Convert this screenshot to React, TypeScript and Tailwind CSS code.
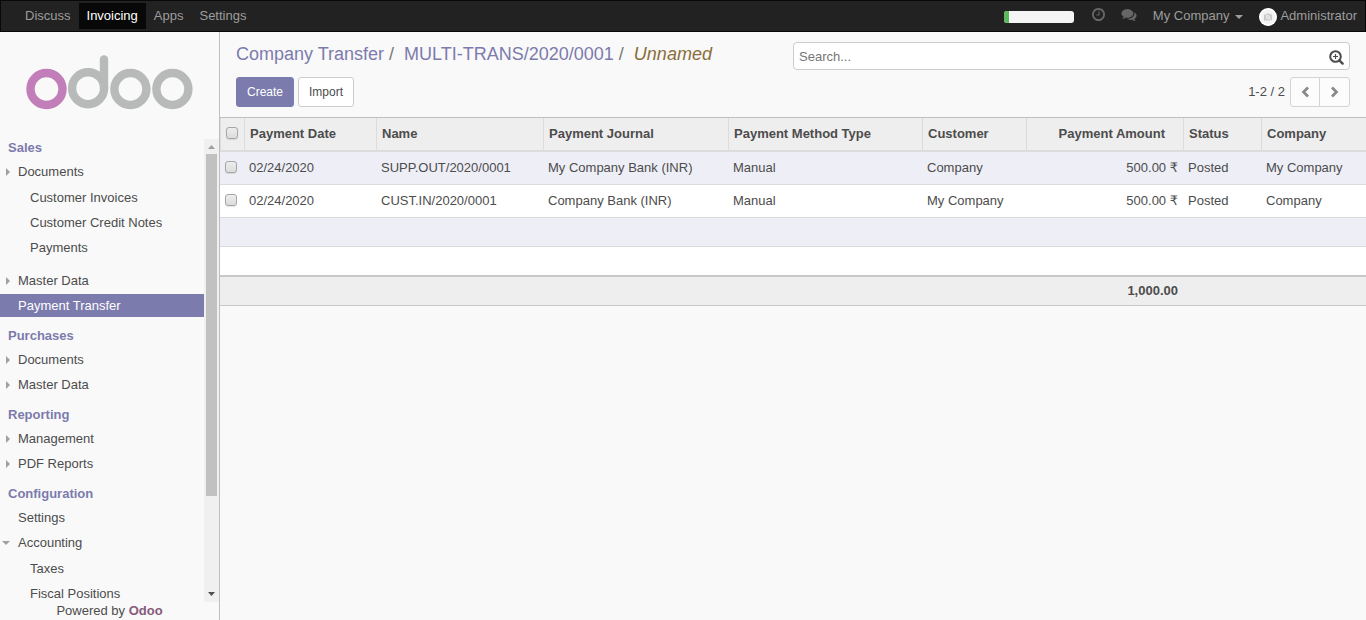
import React from "react";

type IconProps = { d: string; box: string; className: string };

const Icon = ({ d, box, className }: IconProps) => (
  <svg viewBox={box} className={className} fill="currentColor" aria-hidden="true">
    <path d={d} />
  </svg>
);

const CLOCK =
  "M896 544v448q0 14-9 23t-23 9h-320q-14 0-23-9t-9-23v-64q0-14 9-23t23-9h224v-352q0-14 9-23t23-9h64q14 0 23 9t9 23zM1312 896q0-148-73-273t-198-198-273-73-273 73-198 198-73 273 73 273 198 198 273 73 273-73 198-198 73-273zM1536 896q0 209-103 385.5t-279.5 279.5-385.5 103-385.5-103-279.5-279.5-103-385.5 103-385.5 279.5-279.5 385.5-103 385.5 103 279.5 279.5 103 385.5z";
const COMMENTS =
  "M1408 768q0 139-94 257t-256.5 186.5-353.5 68.5q-86 0-176-16-124 88-278 128-36 9-86 16h-3q-11 0-20.5-8t-11.5-21q-1-3-1-6.5t.5-6.5 2-6l2.5-5 3.5-5.5 4-5 4.5-5 4-4.5q5-6 23-25t26-29.5 22.5-29 25-38.5 20.5-44q-124-72-195-177t-71-224q0-139 94-257t256.5-186.5 353.5-68.5 353.5 68.5 256.5 186.5 94 257zM1792 1024q0 120-71 224.5t-195 176.5q10 24 20.5 44t25 38.5 22.5 29 26 29.5 23 25q1 1 4 4.5t4.5 5 4 5 3.5 5.5l2.500 5t2 6 .5 6.5-1 6.5q-3 14-13 22t-22 7q-50-7-86-16-154-40-278-128-90 16-176 16-271 0-472-132 58 4 88 4 161 0 309-45t264-129q125-92 192-212t67-254q0-77-23-152 129 71 204 178t75 230z";

function TopBar() {
  const apps = ["Discuss", "Invoicing", "Apps", "Settings"];
  return (
    <header className="flex h-8 shrink-0 items-center justify-between border border-[#080808] bg-[#222] pr-2 pl-4 text-[#9d9d9d]">
      <nav className="flex">
        {apps.map((app) => (
          <a
            key={app}
            href="#"
            className={
              app === "Invoicing"
                ? "h-[26px] bg-[#080808] px-2 leading-[25px] text-white"
                : "h-[26px] px-2 leading-[25px]"
            }
          >
            {app}
          </a>
        ))}
      </nav>
      <div className="flex h-[26px] items-center pb-[2px]">
        <div className="mt-1 mr-[18px] h-3 w-[70px] overflow-hidden rounded-[3px] bg-[#f5f5f5]">
          <div className="h-full w-[5px] bg-[#5cb85c]" />
        </div>
        <button type="button" aria-label="Activities" className="mr-4 pb-[2px] text-[#666]">
          <Icon d={CLOCK} box="0 128 1536 1536" className="h-[13px] w-[13px]" />
        </button>
        <button type="button" aria-label="Conversations" className="mr-4 pb-[2px] text-[#666]">
          <Icon d={COMMENTS} box="0 128 1792 1536" className="h-[13px] w-4" />
        </button>
        <button type="button" className="mr-4 flex items-center leading-[25px]">
          My Company
          <svg viewBox="0 0 8 4" className="mt-1 ml-[6px] h-1 w-2" fill="currentColor" aria-hidden="true">
            <path d="M0 0h8L4 4z" />
          </svg>
        </button>
        <button type="button" className="flex items-center leading-[25px]">
          <svg viewBox="0 0 18 18" className="mt-[3px] mr-[3px] h-[18px] w-[18px]" aria-hidden="true">
            <circle cx="9" cy="9" r="9" fill="#fff" />
            <circle cx="9" cy="9" r="7.2" fill="#f3f3f3" />
            <path d="M5 6.5h2l.8-1h2.8l.8 1H13v6H5z" fill="#c9c9c9" />
            <circle cx="9.2" cy="9.3" r="1.7" fill="#c9c9c9" stroke="#f5f5f5" strokeWidth="0.9" />
            <path d="M5 5l8 8" stroke="#eee" strokeWidth="0.8" />
          </svg>
          Administrator
        </button>
      </div>
    </header>
  );
}

type Item = { label: string; arrow?: "right" | "down"; active?: boolean; children?: string[] };

const SECTIONS: { title: string; items: Item[] }[] = [
  {
    title: "Sales",
    items: [
      { label: "Documents", arrow: "right", children: ["Customer Invoices", "Customer Credit Notes", "Payments"] },
      { label: "Master Data", arrow: "right" },
      { label: "Payment Transfer", active: true },
    ],
  },
  {
    title: "Purchases",
    items: [
      { label: "Documents", arrow: "right" },
      { label: "Master Data", arrow: "right" },
    ],
  },
  {
    title: "Reporting",
    items: [
      { label: "Management", arrow: "right" },
      { label: "PDF Reports", arrow: "right" },
    ],
  },
  {
    title: "Configuration",
    items: [
      { label: "Settings" },
      { label: "Accounting", arrow: "down", children: ["Taxes", "Fiscal Positions"] },
    ],
  },
];

function MenuArrow({ dir }: { dir?: "right" | "down" }) {
  return (
    <span className="flex w-[18px] shrink-0 items-center pl-[2px]">
      {dir && (
        <svg viewBox="0 0 8 8" className="h-2 w-2" fill="#a0a0a0" aria-hidden="true">
          <path d={dir === "right" ? "M4 0l4 4-4 4z" : "M0 2h8L4 6z"} />
        </svg>
      )}
    </span>
  );
}

function Sidebar() {
  return (
    <aside className="flex w-[220px] shrink-0 flex-col border-r border-[#bfbfbf]">
      <a href="#" aria-label="Odoo" className="h-[107px] shrink-0 pt-[22px] pl-[26px]">
        <svg viewBox="0 0 168 56" className="h-14 w-[168px]" fill="none" strokeWidth="8.4" strokeLinecap="round" aria-hidden="true">
          <circle cx="20.5" cy="35" r="16" stroke="#c17eb8" />
          <g stroke="#b8baba">
            <circle cx="62.1" cy="34.2" r="16" />
            <path d="M78 5.5V34" />
            <circle cx="104.4" cy="35" r="16" />
            <circle cx="146.4" cy="35" r="16" />
          </g>
        </svg>
      </a>
      <div className="flex min-h-0 flex-1">
        <nav className="min-w-0 flex-1 overflow-hidden">
          {SECTIONS.map((section, i) => (
            <section key={section.title}>
              <h2
                className={
                  i === 0
                    ? "flex h-[21px] items-center pb-1 pl-2 font-bold text-[#7c7bad]"
                    : "flex h-[29px] items-center pt-1 pl-2 font-bold text-[#7c7bad]"
                }
              >
                {section.title}
              </h2>
              <ul>
                {section.items.map((item) => (
                  <li key={item.label}>
                    <a
                      href="#"
                      className={
                        item.active
                          ? "mb-[2px] flex h-[23px] items-center bg-[#7c7bad] text-white"
                          : "mb-[2px] flex h-[23px] items-center"
                      }
                    >
                      <MenuArrow dir={item.arrow} />
                      {item.label}
                    </a>
                    {item.children && (
                      <ul className="pt-px pb-2">
                        {item.children.map((child) => (
                          <li key={child}>
                            <a href="#" className="mb-[2px] flex h-[23px] items-center pl-[30px]">
                              {child}
                            </a>
                          </li>
                        ))}
                      </ul>
                    )}
                  </li>
                ))}
              </ul>
            </section>
          ))}
        </nav>
        <div className="flex w-[15px] flex-col items-center bg-[#f0f0f0]" aria-hidden="true">
          <svg viewBox="0 0 15 15" className="h-[15px] w-[15px] shrink-0" fill="#a0a0a0">
            <path d="M4 10h7L7.5 6z" />
          </svg>
          <div className="min-h-0 w-full flex-1 px-[2px]">
            <div className="h-[79%] bg-[#c1c1c1]" />
          </div>
          <svg viewBox="0 0 15 15" className="h-[15px] w-[15px] shrink-0" fill="#505050">
            <path d="M4 5h7L7.5 9z" />
          </svg>
        </div>
      </div>
      <footer className="h-[18px] shrink-0 text-center leading-[18px]">
        Powered by{" "}
        <a href="#" className="font-bold text-[#875a7b]">
          Odoo
        </a>
      </footer>
    </aside>
  );
}

function ControlPanel() {
  return (
    <div className="grid grid-cols-2 gap-y-[7px] border-b border-[#bfbfbf] py-[10px]">
      <ol className="flex h-7 items-center pb-1 pl-4 text-lg text-[#7c7bad]">
        <li>
          <a href="#">Company Transfer</a>
        </li>
        <li>
          <span className="mr-[10px] ml-[5px] text-[#777]">/</span>
          <a href="#">MULTI-TRANS/2020/0001</a>
        </li>
        <li>
          <span className="mr-[10px] ml-[5px] text-[#777]">/</span>
          <span className="text-[#8a6d3b] italic">Unnamed</span>
        </li>
      </ol>
      <div className="mr-4 flex h-7 items-center rounded-[4px] border border-[#ccc] bg-white pr-[5px] pl-[5px]">
        <input
          type="text"
          aria-label="Search"
          placeholder="Search..."
          className="min-w-0 flex-1 bg-transparent pt-[2px] outline-none placeholder:text-[#757575]"
        />
        <button type="button" aria-label="Advanced search" className="pt-[3px]">
          <svg viewBox="0 0 15 15" className="h-[15px] w-[15px]" fill="none" stroke="currentColor" aria-hidden="true">
            <circle cx="6.5" cy="6.5" r="5.3" strokeWidth="2" />
            <path d="M4 6.5h5M6.5 4v5" strokeWidth="1.2" />
            <path d="M10.6 10.6l3 3" strokeWidth="2.4" strokeLinecap="round" />
          </svg>
        </button>
      </div>
      <div className="flex gap-1 pl-4 text-xs">
        <button type="button" className="h-[30px] rounded-[3px] border border-[#7c7bad] bg-[#7c7bad] px-[10px] text-white">
          Create
        </button>
        <button type="button" className="h-[30px] rounded-[3px] border border-[#ccc] bg-white px-[10px]">
          Import
        </button>
      </div>
      <div className="mr-4 flex items-center justify-end gap-[5px]">
        <span>1-2 / 2</span>
        <div className="flex h-[30px] rounded-[3px] border border-[#d5d5d5] bg-[#fcfcfc] text-[#888]">
          <button type="button" aria-label="Previous" className="flex w-[29px] items-center justify-center border-r border-[#d5d5d5]">
            <svg viewBox="0 0 12 12" className="h-3 w-3" fill="none" stroke="currentColor" strokeWidth="2.7" aria-hidden="true">
              <path d="M9 1.5L4.500 6L9 10.500" />
            </svg>
          </button>
          <button type="button" aria-label="Next" className="flex w-[29px] items-center justify-center">
            <svg viewBox="0 0 12 12" className="h-3 w-3" fill="none" stroke="currentColor" strokeWidth="2.7" aria-hidden="true">
              <path d="M3 1.5L7.500 6L3 10.500" />
            </svg>
          </button>
        </div>
      </div>
    </div>
  );
}

const COLUMNS = [
  "Payment Date",
  "Name",
  "Payment Journal",
  "Payment Method Type",
  "Customer",
  "Payment Amount",
  "Status",
  "Company",
];

const ROWS = [
  ["02/24/2020", "SUPP.OUT/2020/0001", "My Company Bank (INR)", "Manual", "Company", "500.00", "Posted", "My Company"],
  ["02/24/2020", "CUST.IN/2020/0001", "Company Bank (INR)", "Manual", "My Company", "500.00", "Posted", "Company"],
];

const Checkbox = ({ label }: { label: string }) => (
  <input
    type="checkbox"
    aria-label={label}
    className="block h-3 w-3 appearance-none rounded-[3px] border border-[#a6a6a6] bg-linear-to-b from-[#ededed] to-[#dcdcdc] shadow-[0_1px_1px_#0000001a] checked:bg-[#7c7bad]"
  />
);

function PaymentTable() {
  return (
    <table className="w-full table-fixed border-separate border-spacing-0">
      <colgroup>
        <col className="w-[24px]" />
        <col className="w-[132px]" />
        <col className="w-[167px]" />
        <col className="w-[185px]" />
        <col className="w-[194px]" />
        <col className="w-[104px]" />
        <col className="w-[157px]" />
        <col className="w-[78px]" />
        <col className="w-[105px]" />
      </colgroup>
      <thead className="bg-[#eee]">
        <tr className="h-[34px]">
          <th className="border-b-2 border-l border-[#dcdcdc] pb-[2px] pl-[5px]">
            <Checkbox label="Select all" />
          </th>
          {COLUMNS.map((col) => (
            <th
              key={col}
              className={
                col === "Payment Amount"
                  ? "border-b-2 border-l border-[#dcdcdc] pr-[18px] text-right font-bold"
                  : "border-b-2 border-l border-[#dcdcdc] pl-[5px] text-left font-bold"
              }
            >
              {col}
            </th>
          ))}
        </tr>
      </thead>
      <tbody>
        {ROWS.map((row) => (
          <tr key={row[1]} className="h-[33px] bg-white odd:bg-[#eeeef6]">
            <td className="border-b border-[#dcdcdc] pb-[2px] pl-[5px]">
              <Checkbox label={`Select ${row[1]}`} />
            </td>
            {row.map((cell, i) => (
              <td
                key={COLUMNS[i]}
                className={
                  i === 5
                    ? "border-b border-[#dcdcdc] pr-[5px] text-right"
                    : "border-b border-[#dcdcdc] pl-[5px]"
                }
              >
                {cell}
                {i === 5 && (
                  <>
                    {"\u00a0"}
                    <span className="font-['DejaVu_Sans',sans-serif]">₹</span>
                  </>
                )}
              </td>
            ))}
          </tr>
        ))}
        <tr className="h-[29px] bg-[#eeeef6]">
          <td colSpan={9} className="border-b border-[#dcdcdc]" />
        </tr>
        <tr className="h-[28px] bg-white">
          <td colSpan={9} />
        </tr>
      </tbody>
      <tfoot className="bg-[#eee] font-bold">
        <tr className="h-[31px]">
          <td colSpan={6} className="border-t-2 border-b border-[#c8c8c8]" />
          <td className="border-t-2 border-b border-[#c8c8c8] pr-[5px] text-right">1,000.00</td>
          <td colSpan={2} className="border-t-2 border-b border-[#c8c8c8]" />
        </tr>
      </tfoot>
    </table>
  );
}

export default function App() {
  return (
    <div className="flex h-screen flex-col bg-[#f9f9f9] font-['Liberation_Sans',Arial,sans-serif] text-[13px] leading-5 text-[#4c4c4c]">
      <TopBar />
      <div className="flex min-h-0 flex-1">
        <Sidebar />
        <main className="min-w-0 flex-1">
          <ControlPanel />
          <PaymentTable />
        </main>
      </div>
    </div>
  );
}
